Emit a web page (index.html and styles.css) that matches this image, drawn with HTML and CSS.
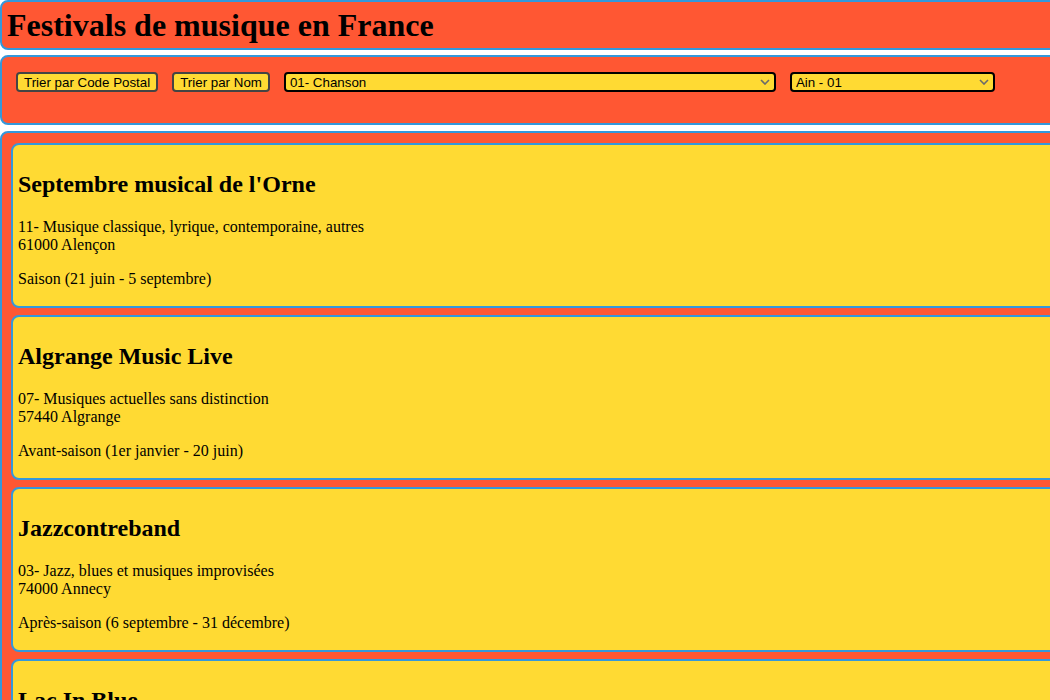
FILE: index.html
```html
<!DOCTYPE html>
<html lang="fr">
<head>
<meta charset="utf-8">
<title>Festivals de musique en France</title>
<link rel="stylesheet" href="styles.css">
</head>
<body>
<header class="banner">
  <h1 class="banner-title">Festivals de musique en France</h1>
</header>
<section class="controls">
  <button class="btn" type="button">Trier par Code Postal</button>
  <button class="btn" type="button">Trier par Nom</button>
  <div class="sel-wrap sel-genre">
    <select class="sel">
      <option>01- Chanson</option>
    </select>
    <svg class="chev" width="10" height="6" viewBox="0 0 10 6" aria-hidden="true"><path d="M1 1 L5 5 L9 1" fill="none" stroke="#6b6b6b" stroke-width="1.6"/></svg>
  </div>
  <div class="sel-wrap sel-dept">
    <select class="sel">
      <option>Ain - 01</option>
    </select>
    <svg class="chev" width="10" height="6" viewBox="0 0 10 6" aria-hidden="true"><path d="M1 1 L5 5 L9 1" fill="none" stroke="#6b6b6b" stroke-width="1.6"/></svg>
  </div>
</section>
<main class="list">
  <article class="card">
    <h2 class="card-title">Septembre musical de l'Orne</h2>
    <p class="card-text">11- Musique classique, lyrique, contemporaine, autres<br>61000 Alençon</p>
    <p class="card-text">Saison (21 juin - 5 septembre)</p>
  </article>
  <article class="card">
    <h2 class="card-title">Algrange Music Live</h2>
    <p class="card-text">07- Musiques actuelles sans distinction<br>57440 Algrange</p>
    <p class="card-text">Avant-saison (1er janvier - 20 juin)</p>
  </article>
  <article class="card">
    <h2 class="card-title">Jazzcontreband</h2>
    <p class="card-text">03- Jazz, blues et musiques improvisées<br>74000 Annecy</p>
    <p class="card-text">Après-saison (6 septembre - 31 décembre)</p>
  </article>
  <article class="card">
    <h2 class="card-title">Lac In Blue</h2>
    <p class="card-text">03- Jazz, blues et musiques improvisées<br>74000 Annecy</p>
    <p class="card-text">Saison (21 juin - 5 septembre)</p>
  </article>
</main>
</body>
</html>
```
FILE: styles.css
```css
html {
  overflow: hidden;
}
body {
  margin: 0;
  font-family: "Liberation Serif", "Times New Roman", serif;
  font-size: 16px;
  color: #000;
  background: #fff;
}
.banner,
.controls,
.list {
  box-sizing: border-box;
  width: calc(100% + 40px);
  background: #ff5733;
  border: 2px solid #3498db;
  border-radius: 8px;
}
.banner {
  padding: 5px;
  height: 50px;
}
.banner-title {
  margin: 0;
  font-size: 32px;
  font-weight: bold;
  line-height: 37px;
}
.controls {
  margin-top: 5px;
  height: 70px;
  padding: 15px 14px 0;
  display: flex;
  align-items: flex-start;
  gap: 14px;
}
.btn,
.sel {
  box-sizing: border-box;
  height: 20px;
  background: #ffda33;
  border-radius: 4px;
  font-family: "Liberation Sans", Arial, sans-serif;
  font-size: 13.333px;
  color: #000;
}
.btn {
  border: 2px solid #444;
  padding: 0 6px;
}
.sel-wrap {
  position: relative;
  display: flex;
}
.sel {
  -webkit-appearance: none;
  appearance: none;
  width: 100%;
  border: 2px solid #000;
  padding: 0 18px 0 4px;
  outline: none;
}
.chev {
  position: absolute;
  right: 6px;
  top: 7px;
  pointer-events: none;
}
.sel-genre {
  width: 492px;
}
.sel-dept {
  width: 205px;
}
.list {
  margin-top: 6px;
  padding: 10px 9px;
  display: flex;
  flex-direction: column;
  gap: 7px;
}
.card {
  box-sizing: border-box;
  height: 165px;
  flex-shrink: 0;
  background: #ffda33;
  border: 2px solid #3498db;
  border-radius: 8px;
  padding: 5px;
}
.card-title {
  margin: 21px 0 20px;
  font-size: 24px;
  line-height: 27px;
}
.card-text {
  margin: 0 0 16px;
  line-height: 18px;
}
```
